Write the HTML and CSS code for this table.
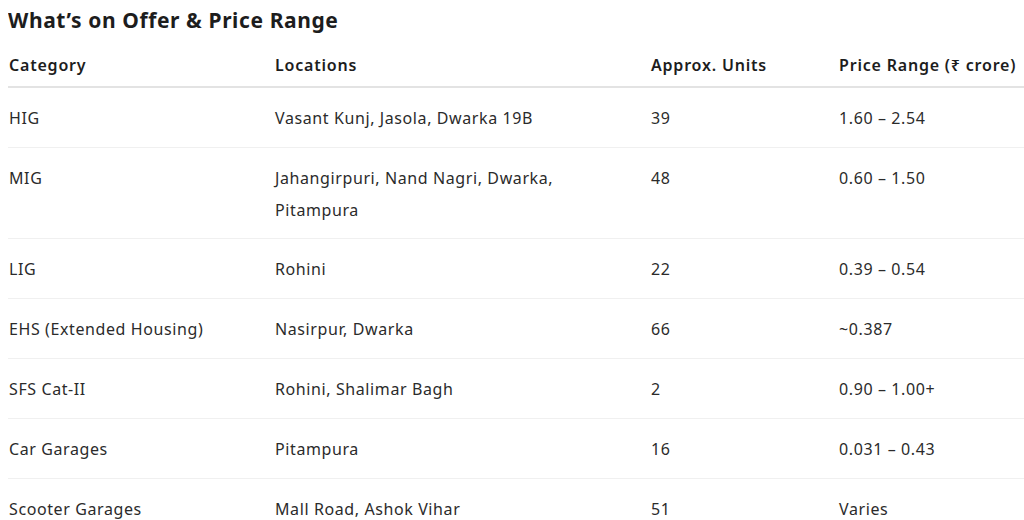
FILE: index.html
```html
<!DOCTYPE html>
<html lang="en">
<head>
<meta charset="utf-8">
<title>What’s on Offer &amp; Price Range</title>
<link rel="stylesheet" href="styles.css">
</head>
<body>
<h3 class="title">What’s on Offer &amp; Price Range</h3>
<table class="offer">
  <colgroup>
    <col class="c1"><col class="c2"><col class="c3"><col class="c4">
  </colgroup>
  <thead>
    <tr><th>Category</th><th>Locations</th><th>Approx. Units</th><th>Price Range (₹ crore)</th></tr>
  </thead>
  <tbody>
    <tr><td>HIG</td><td>Vasant Kunj, Jasola, Dwarka 19B</td><td>39</td><td>1.60 – 2.54</td></tr>
    <tr><td>MIG</td><td>Jahangirpuri, Nand Nagri, Dwarka,<br>Pitampura</td><td>48</td><td>0.60 – 1.50</td></tr>
    <tr><td>LIG</td><td>Rohini</td><td>22</td><td>0.39 – 0.54</td></tr>
    <tr><td>EHS (Extended Housing)</td><td>Nasirpur, Dwarka</td><td>66</td><td>~0.387</td></tr>
    <tr><td>SFS Cat-II</td><td>Rohini, Shalimar Bagh</td><td>2</td><td>0.90 – 1.00+</td></tr>
    <tr><td>Car Garages</td><td>Pitampura</td><td>16</td><td>0.031 – 0.43</td></tr>
    <tr><td>Scooter Garages</td><td>Mall Road, Ashok Vihar</td><td>51</td><td>Varies</td></tr>
  </tbody>
</table>
</body>
</html>
```

FILE: styles.css
```css
html, body {
  background: #ffffff;
}
body {
  margin: 0 0 0 8px;
  font-family: "Noto Sans", "Open Sans", "Liberation Sans", sans-serif;
  color: #2b2b2b;
  overflow: hidden;
}
.title {
  margin: 0;
  padding-top: 6px;
  font-size: 21px;
  line-height: 28px;
  font-weight: 700;
  color: #1d1d1d;
  letter-spacing: 0.6px;
}
.offer {
  width: 1016px;
  border-collapse: collapse;
  table-layout: fixed;
  margin-top: 15px;
  font-size: 16px;
}
.c1 { width: 266px; }
.c2 { width: 376px; }
.c3 { width: 188px; }
.c4 { width: 186px; }
.offer th {
  text-align: left;
  font-weight: 600;
  color: #1d1d1d;
  line-height: 32px;
  padding: 0 0 5px 1px;
  border-bottom: 2px solid #e3e3e3;
  white-space: nowrap;
  letter-spacing: 0.8px;
}
.offer td {
  line-height: 32px;
  padding: 14px 0 13px 1px;
  border-bottom: 1px solid #f0f0f0;
  vertical-align: top;
  letter-spacing: 0.6px;
}
.offer tbody tr:nth-child(2) td {
  padding-bottom: 12px;
}
```
